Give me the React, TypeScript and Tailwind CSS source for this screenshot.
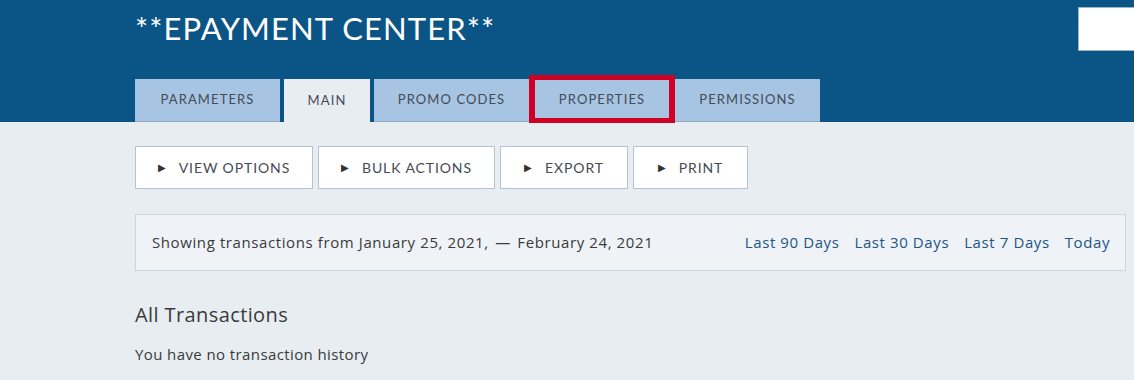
const tabs = [
  { label: "PARAMETERS", w: "w-[145px]" },
  { label: "MAIN", w: "w-[86px]", active: true },
  { label: "PROMO CODES", w: "w-[155px]" },
  { label: "PROPERTIES", w: "w-[138px]" },
  { label: "PERMISSIONS", w: "w-[145px]" },
];

const actions = [
  { label: "VIEW OPTIONS", w: "w-[178px]" },
  { label: "BULK ACTIONS", w: "w-[177px]" },
  { label: "EXPORT", w: "w-[128px]" },
  { label: "PRINT", w: "w-[115px]" },
];

const ranges = ["Last 90 Days", "Last 30 Days", "Last 7 Days", "Today"];

export default function App() {
  return (
    <div className="min-h-[380px] bg-[#e8edf2] font-['Open_Sans','Lato',sans-serif] text-[#3a3a3a]">
      {/* Header */}
      <header className="relative h-[122px] bg-[#0b5486]">
        <h1 className="pl-[135px] pt-[8px] font-['Lato',sans-serif] text-[31px] leading-[40px] tracking-[1.1px] text-white">
          **EPAYMENT CENTER**
        </h1>
        <div className="absolute right-0 top-[7px] h-[44px] w-[56px] border border-r-0 border-[#9fb3c8] bg-white" />

        <nav className="absolute bottom-0 left-[135px] flex items-end gap-[4px] font-['Lato',sans-serif]">
          {tabs.map((t) => (
            <div
              key={t.label}
              className={`${t.w} flex h-[43px] items-center justify-center text-[13px] tracking-[1.1px] text-[#454a55] ${
                t.active ? "bg-[#e8edf2]" : "border-b border-[#8ea8c2] bg-[#a7c5e3]"
              }`}
            >
              {t.label}
            </div>
          ))}
          {/* highlight marker around PROPERTIES */}
          <div className="pointer-events-none absolute left-[394px] top-[-4px] h-[48px] w-[146px] border-x-[6px] border-y-[5px] border-[#cf0024]" />
        </nav>
      </header>

      <main className="px-[135px] pr-[8px] pt-[24px]">
        {/* Action buttons */}
        <div className="flex gap-[5px] font-['Lato',sans-serif]">
          {actions.map((a) => (
            <button
              key={a.label}
              className={`${a.w} flex h-[43px] items-center justify-center gap-[12px] border border-[#b6c2cf] bg-white text-[14px] tracking-[0.9px] text-[#454a55]`}
            >
              <span className="text-[10px] text-[#333]">▶</span>
              {a.label}
            </button>
          ))}
        </div>

        {/* Date range bar */}
        <div className="mt-[25px] flex h-[57px] items-center justify-between border border-[#c9d5e1] bg-[#eff3f8] pl-[16px] pr-[15px] text-[15px] tracking-[0.6px]">
          <span className="text-[#3a3a3a]">
            Showing transactions from January 25, 2021, <span className="mx-[2px]">—</span> February 24, 2021
          </span>
          <div className="flex gap-[15px] text-[#1d5584]">
            {ranges.map((r) => (
              <a key={r} href="#" className="hover:underline">
                {r}
              </a>
            ))}
          </div>
        </div>

        <h2 className="mt-[30px] text-[20px] leading-[28px] tracking-[0.4px] text-[#3a3a3a]">All Transactions</h2>
        <p className="mt-[14px] text-[15px] tracking-[0.4px] text-[#3a3a3a]">You have no transaction history</p>
      </main>
    </div>
  );
}
